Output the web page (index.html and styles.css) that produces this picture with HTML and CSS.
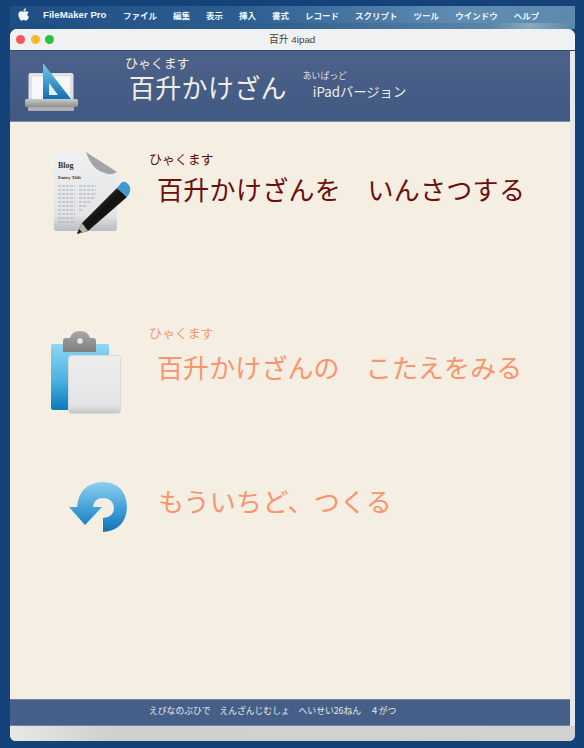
FILE: index.html
```html
<!DOCTYPE html>
<html lang="ja">
<head>
<meta charset="utf-8">
<title>百升 4ipad</title>
<link rel="stylesheet" href="styles.css">
</head>
<body>
<div class="screen">
  <nav class="menubar">
    <svg class="apple" viewBox="0 0 14 16" width="11" height="13"><path fill="#f4f6f8" d="M10.2 0c.1 1-.3 1.900-.9 2.600-.6.700-1.500 1.200-2.400 1.100-.1-.9.400-1.900.9-2.500C8.400.5 9.400 0 10.200 0zM13.500 5.500c-.9.600-1.500 1.500-1.500 2.700 0 1.300.8 2.300 2 2.800-.3.900-.7 1.800-1.300 2.700-.8 1.100-1.500 2.100-2.600 2.100s-1.400-.7-2.700-.7-1.700.7-2.700.7c-1.100 0-1.900-1.100-2.700-2.300C.9 11 .2 8.800.6 6.900c.4-1.900 1.900-3 3.500-3 1.100 0 2 .7 2.800.7.700 0 1.800-.8 3.100-.8 1.300 0 2.700.6 3.500 1.700z"/></svg>
    <span class="menu-app">FileMaker Pro</span>
    <span class="menu-item">ファイル</span>
    <span class="menu-item">編集</span>
    <span class="menu-item">表示</span>
    <span class="menu-item">挿入</span>
    <span class="menu-item">書式</span>
    <span class="menu-item">レコード</span>
    <span class="menu-item">スクリプト</span>
    <span class="menu-item">ツール</span>
    <span class="menu-item">ウインドウ</span>
    <span class="menu-item">ヘルプ</span>
  </nav>
  <div class="wallpaper"></div>
  <div class="window">
    <div class="titlebar">
      <i class="light red"></i><i class="light yellow"></i><i class="light green"></i>
      <span class="title">百升 4ipad</span>
    </div>
    <div class="body">
      <div class="main">
        <header class="head">
          <svg class="head-icon" viewBox="0 0 54 50" width="54" height="50">
            <defs>
              <linearGradient id="tri" x1="0" y1="0" x2="0" y2="1"><stop offset="0" stop-color="#7cc9e6"/><stop offset="1" stop-color="#0f6fb4"/></linearGradient>
              <linearGradient id="base" x1="0" y1="0" x2="0" y2="1"><stop offset="0" stop-color="#c9c9c9"/><stop offset="1" stop-color="#8f8f8f"/></linearGradient>
            </defs>
            <rect x="3.500" y="11" width="45" height="28" rx="2" fill="#dfe1e4"/>
            <rect x="7" y="14.500" width="38" height="24" fill="#f6f7f8"/>
            <path d="M18 1 L46 37 H18 Z" fill="url(#tri)"/>
            <path d="M24 21 L33 33 H24 Z" fill="#e9edf0"/>
            <rect x="0" y="37" width="53" height="8" rx="1.500" fill="url(#base)"/>
            <rect x="3" y="45" width="46" height="4" rx="1" fill="#aeb0b3"/>
          </svg>
          <div class="head-title">
            <div class="ruby head-ruby">ひゃくます</div>
            <div class="head-name">百升かけざん</div>
          </div>
          <div class="head-sub">
            <div class="sub-ruby">あいぱっど</div>
            <div class="sub-name">iPadバージョン</div>
          </div>
        </header>
        <section class="content">
          <div class="action action-print">
            <svg class="icon" viewBox="0 0 82 84" width="82" height="84">
              <defs>
                <linearGradient id="paper" x1="0" y1="0" x2="0" y2="1"><stop offset="0" stop-color="#eef0f1"/><stop offset=".8" stop-color="#e2e4e6"/><stop offset="1" stop-color="#b9bcbf"/></linearGradient>
                <linearGradient id="pen" x1="0" y1="0" x2="1" y2="1"><stop offset="0" stop-color="#666"/><stop offset=".5" stop-color="#111"/><stop offset="1" stop-color="#333"/></linearGradient>
              </defs>
              <path d="M4 2 Q4 0 6 0 H36 L67 20 V76 Q67 79 64 79 H7 Q4 79 4 76 Z" fill="url(#paper)"/>
              <path d="M36 0 L67 20 Q60 24 55 21 Q42 18 36 0 Z" fill="#a4a4a4"/>
              <text x="8" y="16" class="blog">Blog</text>
              <text x="8" y="27" class="entry">Entry Title</text>
              <g stroke="#a9adb0" stroke-width="1" stroke-dasharray="3 1">
                <path d="M8 34H25M29 34H46M8 38H25M29 38H46M8 42H25M29 42H46M8 46H25M29 46H44M8 50H25M29 50H40M8 54H25M29 54H36M8 58H25M29 58H33M8 62H25M8 66H25M8 70H25"/>
              </g>
              <path d="M27 82 L32 71 L67 36 L77 45 L38 79 Z" fill="url(#pen)"/>
              <path d="M27 82 L32 71 L38 79 Z" fill="#b9b2a6"/>
              <path d="M27 82 L29 77 L32 80 Z" fill="#222"/>
              <path d="M67 36 L72 30 Q77 29 80 35 Q81 40 77 45 Z" fill="#3f98cf"/>
            </svg>
            <div class="labels">
              <div class="ruby ruby-dark">ひゃくます</div>
              <div class="label label-dark">百升かけざんを　いんさつする</div>
            </div>
          </div>
          <div class="action action-answer">
            <svg class="icon" viewBox="0 0 74 84" width="74" height="84">
              <defs>
                <linearGradient id="clip" x1="0" y1="0" x2="0" y2="1"><stop offset="0" stop-color="#8fd6f2"/><stop offset=".55" stop-color="#4ab2e2"/><stop offset="1" stop-color="#0f78b8"/></linearGradient>
                <linearGradient id="sheet" x1="0" y1="0" x2="0" y2="1"><stop offset="0" stop-color="#eeeeef"/><stop offset=".85" stop-color="#e4e4e6"/><stop offset="1" stop-color="#c4c5c6"/></linearGradient>
                <linearGradient id="metal" x1="0" y1="0" x2="0" y2="1"><stop offset="0" stop-color="#a9a9a9"/><stop offset="1" stop-color="#7d7d7d"/></linearGradient>
              </defs>
              <rect x="1" y="14" width="58" height="66" rx="2" fill="url(#clip)"/>
              <path d="M13 22 V11 Q13 8 16 8 H20 Q22 1 30 1 Q38 1 40 8 H43 Q46 8 46 11 V22 Z" fill="url(#metal)"/>
              <circle cx="30" cy="11" r="2.800" fill="#e8e8e8"/>
              <rect x="18.500" y="25.500" width="52" height="58" rx="3" fill="url(#sheet)" stroke="#d9d9d6"/>
            </svg>
            <div class="labels">
              <div class="ruby ruby-light">ひゃくます</div>
              <div class="label label-light">百升かけざんの　こたえをみる</div>
            </div>
          </div>
          <div class="action action-again">
            <svg class="icon" viewBox="0 0 62 54" width="62" height="54">
              <defs>
                <linearGradient id="arc" x1="0" y1="0" x2="0" y2="1"><stop offset="0" stop-color="#8ed0ef"/><stop offset=".55" stop-color="#3f9fd8"/><stop offset="1" stop-color="#1070b4"/></linearGradient>
              </defs>
              <path d="M34 52 V38 Q45 37 45 28 Q44 18 34 18 Q25 18 24 27 H33 L16 45 L0 27 H8 Q10 3 34 2 Q57 3 58 27 Q57 50 34 52 Z" fill="url(#arc)"/>
            </svg>
            <div class="labels">
              <div class="label label-light">もういちど、つくる</div>
            </div>
          </div>
        </section>
        <footer class="foot">えびなのぶひで　えんざんじむしょ　へいせい26ねん　４がつ</footer>
      </div>
      <div class="scrollbar"></div>
    </div>
    <div class="bottom"></div>
  </div>
</div>
</body>
</html>
```

FILE: styles.css
```css
* { box-sizing: border-box; }
html, body { margin: 0; padding: 0; }
body {
  width: 584px;
  height: 748px;
  overflow: hidden;
  background: #16427a;
  font-family: "Noto Sans CJK JP", "Liberation Sans", sans-serif;
}
.screen {
  width: 565px;
  margin-left: 10px;
  padding-top: 6px;
}
.menubar {
  height: 17px;
  display: flex;
  align-items: center;
  color: #f2f5f8;
  font-size: 8.500px;
  font-weight: 700;
  background: linear-gradient(90deg, #1f4f85 0%, #2c5d92 40%, #5f8db3 80%, #5c89ae 100%);
  white-space: nowrap;
}
.apple { margin-left: 8px; }
.menu-app { margin-left: 14px; font-family: "Liberation Sans", sans-serif; font-size: 9.700px; width: 64px; }
.menu-item { margin-left: 16px; }
.wallpaper {
  height: 6px;
  background: linear-gradient(90deg, #1d4c82 0%, #33628f 50%, #5a86a8 85%, #8aa9c0 92%, #5a86a8 100%);
}
.window {
  height: 712px;
  border-radius: 7px 7px 6px 6px;
  background: #f0f1f3;
  overflow: hidden;
  display: flex;
  flex-direction: column;
}
.titlebar {
  height: 22px;
  flex: none;
  position: relative;
  display: flex;
  align-items: center;
  gap: 5.500px;
  padding-left: 6px;
  background: #f0f1f3;
  border-bottom: 1px solid #2c4a78;
}
.light { width: 9px; height: 9px; border-radius: 50%; display: block; }
.red { background: #fb5551; }
.yellow { background: #fdb52b; }
.green { background: #2ac33e; }
.title {
  position: absolute;
  left: 259px;
  top: 4px;
  font-size: 9.800px;
  line-height: 13px;
  color: #3f3f3f;
  font-family: "Liberation Sans", "Noto Sans CJK JP", sans-serif;
}
.body { flex: 1; display: flex; min-height: 0; }
.main { flex: 1; display: flex; flex-direction: column; min-width: 0; }
.scrollbar { width: 5px; background: #e6e7ea; }
.bottom {
  height: 15px;
  flex: none;
  background: linear-gradient(90deg, #e8e8e8 0%, #d0d0d0 18%, #d2d2d2 100%);
}
.head {
  height: 71px;
  flex: none;
  display: flex;
  color: #f1eee4;
  background: linear-gradient(180deg, #4d6288 0%, #465d87 50%, #425a82 100%);
  border-bottom: 1px solid #7b8ca8;
}
.head-icon { margin: 11px 0 0 15px; flex: none; }
.head-title { margin-left: 45px; padding-top: 5px; flex: none; }
.head-ruby { margin-left: 1px; }
.ruby { font-size: 13px; line-height: 14px; letter-spacing: -0.1px; }
.head-name { font-size: 26px; line-height: 34px; margin: 0 0 0 5px; letter-spacing: .3px; }
.head-sub { margin-left: 16px; padding-top: 19px; }
.sub-ruby { font-size: 8.800px; line-height: 11px; color: #dfe0e0; }
.sub-name { font-size: 13.300px; line-height: 20px; margin: 1px 0 0 10px; }
.content {
  flex: 1;
  background: #f5eee2;
  padding-top: 30px;
}
.action { display: flex; padding-left: 40px; }
.action-print { height: 178px; }
.action-answer { height: 150px; }
.action-again { padding-left: 59px; }
.labels { flex: none; }
.action-print .labels { padding-left: 17px; }
.action-answer .labels { padding-left: 25px; margin-top: -4px; }
.action-answer .label { margin-top: 9px; letter-spacing: .1px; }
.action-again .labels { padding-left: 27px; }
.action-again .label { margin: 3px 0 0; }
.ruby-dark { color: #5c1208; }
.ruby-light { color: #f39a78; }
.label { font-size: 26px; line-height: 36px; margin: 5px 0 0 8px; white-space: nowrap; letter-spacing: .3px; }
.label-dark { color: #6b0f0a; }
.label-light { color: #f9956d; }
.blog { font: 700 8px "Liberation Serif", serif; fill: #333; }
.entry { font: 700 5px "Liberation Serif", serif; fill: #333; }
.foot {
  height: 27px;
  flex: none;
  background: #465f88;
  border-top: 1px solid #6f83a3;
  border-bottom: 1px solid #6f83a3;
  color: #e9e9e6;
  font-size: 8.800px;
  line-height: 22px;
  padding-left: 139px;
  white-space: nowrap;
}
```
